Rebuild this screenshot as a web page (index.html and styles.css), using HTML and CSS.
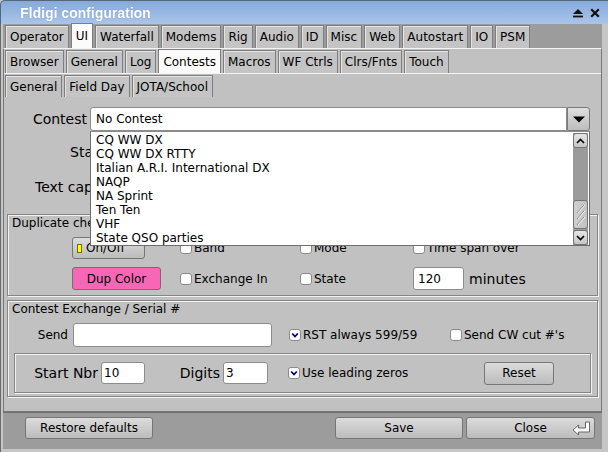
FILE: index.html
```html
<!DOCTYPE html>
<html>
<head>
<meta charset="utf-8">
<title>Fldigi configuration</title>
<link rel="stylesheet" href="styles.css">
</head>
<body>
<div class="win">
  <div class="titlebar">
    <span class="title">Fldigi configuration</span>
    <span class="wctl">
      <svg width="12" height="10" viewBox="0 0 12 10"><path d="M1 6 L6 1 L11 6 Z" fill="#111"/><rect x="1" y="7.6" width="10" height="1.8" fill="#111"/></svg>
      <svg width="10" height="10" viewBox="0 0 10 10"><path d="M1.2 1.2 L8.8 8.8 M8.8 1.2 L1.2 8.8" stroke="#111" stroke-width="2.2"/></svg>
    </span>
  </div>
  <div class="frame">
    <div class="tabrow r1">
      <div class="tab">Operator</div><div class="tab sel">UI</div><div class="tab">Waterfall</div><div class="tab">Modems</div><div class="tab">Rig</div><div class="tab">Audio</div><div class="tab">ID</div><div class="tab">Misc</div><div class="tab">Web</div><div class="tab">Autostart</div><div class="tab">IO</div><div class="tab">PSM</div>
    </div>
    <div class="panel outer">
      <div class="tabrow r2">
        <div class="tab">Browser</div><div class="tab">General</div><div class="tab">Log</div><div class="tab sel">Contests</div><div class="tab">Macros</div><div class="tab">WF Ctrls</div><div class="tab">Clrs/Fnts</div><div class="tab">Touch</div>
      </div>
      <div class="panel inner">
        <div class="tabrow r3">
          <div class="tab cur">General</div><div class="tab">Field Day</div><div class="tab">JOTA/School</div>
        </div>
        <div class="content">
          <div class="contest-row">
            <span class="lbl big contest-lbl">Contest</span>
            <div class="field combo-input">No Contest</div>
            <div class="combo-btn"><svg width="12" height="7" viewBox="0 0 12 7"><path d="M0 0.5 H12 L6 6.5 Z" fill="#000"/></svg></div>
            <div class="droplist">
              <ul class="items">
                <li>CQ WW DX</li>
                <li>CQ WW DX RTTY</li>
                <li>Italian A.R.I. International DX</li>
                <li>NAQP</li>
                <li>NA Sprint</li>
                <li>Ten Ten</li>
                <li>VHF</li>
                <li>State QSO parties</li>
              </ul>
              <div class="vscroll">
                <div class="sbtn"><svg width="9" height="6" viewBox="0 0 9 6"><path d="M1 5 L4.5 1.5 L8 5" stroke="#000" stroke-width="1.6" fill="none"/></svg></div>
                <div class="strough"></div>
                <div class="sthumb"><svg width="13" height="27" viewBox="0 0 13 27"><path d="M3 12 L10 4 M3 18 L10 10 M3 24 L10 16" stroke="#8a8a8a" stroke-width="1"/><path d="M4 12 L11 4 M4 18 L11 10 M4 24 L11 16" stroke="#f2f2f2" stroke-width="1"/></svg></div>
                <div class="sbtn down"><svg width="9" height="6" viewBox="0 0 9 6"><path d="M1 1 L4.5 4.5 L8 1" stroke="#000" stroke-width="1.6" fill="none"/></svg></div>
              </div>
            </div>
          </div>
          <div class="line station"><span class="lbl big">Station</span></div>
          <div class="line textcap"><span class="lbl big">Text capture</span></div>

          <div class="group dup">
            <div class="legend">Duplicate check</div>
            <div class="dupgrid">
              <div class="btn onoff"><span class="light"></span>On/Off</div>
              <div class="chk"><span class="box"></span>Band</div>
              <div class="chk"><span class="box"></span>Mode</div>
              <div class="chk"><span class="box"></span>Time span over</div>
              <div class="btn dupcolor">Dup Color</div>
              <div class="chk"><span class="box"></span>Exchange In</div>
              <div class="chk"><span class="box"></span>State</div>
              <div class="spanrow"><div class="field mins">120</div><span class="big">minutes</span></div>
            </div>
          </div>

          <div class="group exch">
            <div class="legend">Contest Exchange / Serial #</div>
            <div class="sendrow">
              <span class="lbl send-lbl">Send</span>
              <div class="field send-in"></div>
              <div class="chk rst"><span class="box on"><svg width="8" height="6" viewBox="0 0 8 6"><path d="M1.2 1.5 L4 4.5 L6.8 1.5" stroke="#00007a" stroke-width="1.8" fill="none"/></svg></span>RST always 599/59</div>
              <div class="chk"><span class="box"></span>Send CW cut #'s</div>
            </div>
            <div class="serialbox">
              <span class="lbl big start-lbl">Start Nbr</span>
              <div class="field start-in">10</div>
              <span class="lbl big digits-lbl">Digits</span>
              <div class="field digits-in">3</div>
              <div class="chk lead"><span class="box on"><svg width="8" height="6" viewBox="0 0 8 6"><path d="M1.2 1.5 L4 4.5 L6.8 1.5" stroke="#00007a" stroke-width="1.8" fill="none"/></svg></span>Use leading zeros</div>
              <div class="btn reset">Reset</div>
            </div>
          </div>
        </div>
      </div>
    </div>
    <div class="footer">
      <div class="btn restore">Restore defaults</div>
      <div class="spacer"></div>
      <div class="btn save">Save</div>
      <div class="btn close">Close<svg class="ret" width="19" height="14" viewBox="0 0 19 14"><path d="M1 9 L6.5 4 L6.5 7 L13.5 7 L13.5 1 L17.5 1 L17.5 11 L6.5 11 L6.5 14 Z" fill="#fff" stroke="#666" stroke-width="1" stroke-linejoin="miter"/></svg></div>
    </div>
  </div>
</div>
</body>
</html>
```
FILE: styles.css
```css
* { box-sizing: border-box; }
html, body { margin: 0; padding: 0; }
body {
  width: 608px; height: 452px; overflow: hidden;
  font-family: "DejaVu Sans", sans-serif; font-size: 12px; color: #000;
  background: #c6c6c6;
}
.win { width: 608px; height: 452px; display: flex; flex-direction: column; }

.titlebar {
  height: 24px; flex: none;
  display: flex; align-items: center; justify-content: space-between;
  background: linear-gradient(#86aada, #a9c5ea);
  border-top: 1px solid #55657a; border-left: 1px solid #55657a;
  border-radius: 5px 0 0 0;
  padding: 0 8px 0 19px;
}
.title {
  font-family: "Liberation Sans", sans-serif; font-weight: bold; font-size: 14px;
  color: #fff; text-shadow: 0 0 1px #5a7aa8;
}
.wctl { display: flex; gap: 6px; align-items: center; }

.frame {
  flex: 1; display: flex; flex-direction: column;
  padding: 0 6px 3px 2px;
  border-left: 1px solid #6a6a6a;
  background: #c6c6c6;
}

.tabrow { display: flex; align-items: flex-end; flex: none; }
.tab {
  height: 23px; padding: 0 4px; margin-right: 2px;
  display: flex; align-items: center; white-space: nowrap;
  background: #c4c4c4;
  border: 1px solid #7e7e7e; border-bottom: none;
  box-shadow: inset 1px 1px 0 #e4e4e4;
}
.tab.sel { background: #fbfbfb; height: 25px; box-shadow: none; }
.tab.cur { background: #c1c1c1; height: 24px; }
.r1 { height: 24px; background: #9c9c9c; padding-left: 2px; }
.r2 { height: 24px; padding-left: 1px; }
.r2 .tab { height: 23px; }
.r2 .tab.sel { height: 24px; }
.r3 { height: 23px; padding-left: 1px; }
.r3 .tab { height: 22px; }

.panel { background: #c1c1c1; display: flex; flex-direction: column; }
.panel.outer {
  height: 364px; flex: none;
  border-top: 1px solid #f4f4f4;
  border-left: 1px solid #777; border-right: 1px solid #777;
}
.panel.inner { flex: 1; border-top: 1px solid #f4f4f4; }

.content {
  flex: 1; padding: 10px 3px 0 3px;
  display: flex; flex-direction: column;
  border-bottom: 1px solid #777;
}
.big { font-size: 14px; }
.lbl { white-space: nowrap; }

.contest-row { position: relative; display: flex; height: 24px; align-items: center; flex: none; }
.contest-lbl { width: 83px; text-align: right; padding-right: 3px; }
.field {
  background: #fff; border: 1px solid #8c8c8c; border-radius: 3px;
  display: flex; align-items: center; padding-left: 4px;
}
.combo-input { width: 477px; height: 24px; border-radius: 3px 0 0 3px; padding-left: 5px; }
.combo-btn {
  width: 23px; height: 24px;
  background: linear-gradient(#dedede, #bdbdbd);
  border: 1px solid #7a7a7a; border-radius: 0 3px 3px 0;
  display: flex; align-items: center; justify-content: center;
}

.droplist {
  position: absolute; z-index: 5; left: 83px; top: 24px;
  width: 500px; height: 115px;
  background: #fff; border: 1px solid #6e6e6e; border-top-color: #8c8c8c;
}
.items { list-style: none; margin: 0; padding: 1px 0 0 5px; }
.items li { height: 14px; line-height: 14px; white-space: nowrap; }
.vscroll {
  position: absolute; top: 1px; right: 1px; width: 15px; height: 112px;
  background: #9b9b9b; display: flex; flex-direction: column;
}
.sbtn {
  height: 15px; flex: none;
  background: linear-gradient(#e6e6e6, #c6c6c6);
  border: 1px solid #737373; border-radius: 3px;
  display: flex; align-items: center; justify-content: center;
}
.strough { height: 52px; flex: none; }
.sthumb {
  height: 29px; flex: none; margin-bottom: 1px;
  background: linear-gradient(90deg, #cfcfcf, #c2c2c2);
  border: 1px solid #737373; border-radius: 3px;
  display: flex; align-items: center; justify-content: center;
}

.line { height: 24px; display: flex; align-items: center; flex: none; }
.station { margin-top: 9px; padding-left: 63px; }
.textcap { margin-top: 11px; padding-left: 28px; }

.group {
  border: 1px solid #858585;
  box-shadow: inset 1px 1px 0 #f2f2f2, 1px 1px 0 #f2f2f2;
  flex: none;
}
.legend { height: 17px; line-height: 17px; padding-left: 4px; white-space: nowrap; }
.dup { margin-top: 15px; height: 82px; }
.dupgrid {
  margin-top: 5px;
  display: grid;
  grid-template-columns: 172px 120px 113px 1fr;
  grid-template-rows: 22px 23px;
  row-gap: 8px;
  align-items: center;
}
.btn {
  background: linear-gradient(#dcdcdc, #bcbcbc);
  border: 1px solid #767676; border-radius: 3px;
  display: flex; align-items: center; justify-content: center;
  white-space: nowrap;
}
.onoff { margin-left: 64px; width: 73px; height: 22px; justify-content: flex-start; padding-left: 4px; }
.light { width: 5px; height: 9px; background: #ffff00; border: 1px solid #6e6e00; margin-right: 4px; }
.dupcolor { margin-left: 64px; width: 89px; height: 23px; background: #f867b5; border-color: #7a6a72; }
.chk { display: flex; align-items: center; white-space: nowrap; }
.box {
  width: 12px; height: 12px; margin-right: 2px; flex: none;
  background: #fff; border: 1px solid #8a8a8a; border-radius: 3px;
  display: flex; align-items: center; justify-content: center;
}
.spanrow { display: flex; align-items: center; }
.mins { width: 51px; height: 23px; margin-right: 5px; }

.exch { margin-top: 4px; height: 97px; }
.exch .legend { height: 16px; line-height: 16px; }
.sendrow { margin-top: 6px; height: 24px; display: flex; align-items: center; }
.send-lbl { width: 65px; text-align: right; padding-right: 5px; }
.send-in { width: 199px; height: 24px; }
.rst { margin-left: 17px; width: 161px; }
.serialbox {
  margin: 6px 6px 0 6px; height: 40px;
  border: 1px solid #858585;
  box-shadow: inset 1px 1px 0 #f2f2f2, 1px 1px 0 #f2f2f2;
  display: flex; align-items: center;
}
.start-lbl { width: 86px; text-align: right; padding-right: 3px; }
.start-in { width: 44px; height: 22px; padding-left: 2px; }
.digits-lbl { width: 78px; text-align: right; padding-right: 3px; }
.digits-in { width: 45px; height: 22px; padding-left: 2px; }
.lead { margin-left: 20px; width: 196px; }
.reset { width: 70px; height: 23px; }

.footer {
  height: 37px; flex: none;
  background: #9c9c9c; border-top: 1px solid #6e6e6e;
  display: flex; align-items: flex-start;
  padding: 4px 7px 0 22px;
}
.spacer { flex: 1; }
.restore { width: 128px; height: 22px; }
.save { width: 128px; height: 22px; margin-right: 3px; }
.close { width: 129px; height: 22px; position: relative; }
.ret { position: absolute; right: 3px; top: 3px; }
```
